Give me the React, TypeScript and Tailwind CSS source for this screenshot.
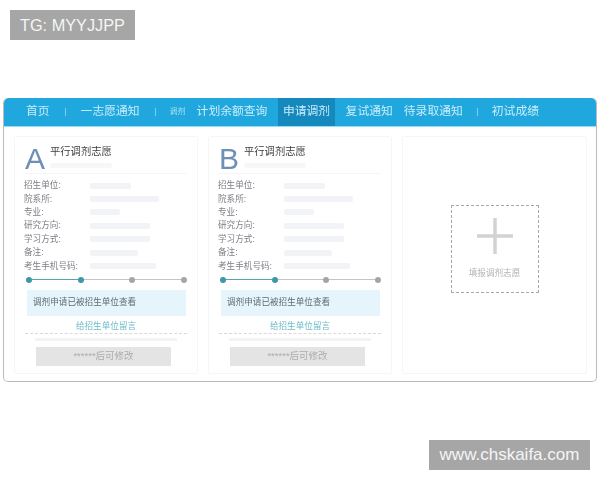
import React from 'react';

const CJK = "font-['Liberation_Sans','Noto_Sans_CJK_SC',sans-serif]";

const ROWS = [
  { label: '招生单位:', bar: 'w-[41px]' },
  { label: '院系所:', bar: 'w-[69px]' },
  { label: '专业:', bar: 'w-[30px]' },
  { label: '研究方向:', bar: 'w-[60px]' },
  { label: '学习方式:', bar: 'w-[60px]' },
  { label: '备注:', bar: 'w-[48px]' },
  { label: '考生手机号码:', bar: 'w-[66px]' },
];

function Separator({ className }: { className: string }) {
  return <span className={`w-px h-[8px] bg-[#7fd0ee] ${className}`} />;
}

function Nav() {
  return (
    <div className="flex items-center h-[29px] bg-[#20a8de] rounded-t-[5px] border-b border-[#8fe0f8] text-[#c9ecf9] text-[11.8px] whitespace-nowrap">
      <span className="ml-[22px]">首页</span>
      <Separator className="ml-[15px]" />
      <span className="ml-[15px]">一志愿通知</span>
      <Separator className="ml-[15px]" />
      <span className="ml-[14px] text-[8px] text-[#a9def3]">调剂</span>
      <span className="ml-[11px]">计划余额查询</span>
      <span className="ml-[11px] h-full px-[4.5px] flex items-center bg-[#1589bd]">申请调剂</span>
      <span className="ml-[11px]">复试通知</span>
      <span className="ml-[11px]">待录取通知</span>
      <Separator className="ml-[14px]" />
      <span className="ml-[14px]">初试成绩</span>
    </div>
  );
}

function Step({ on, line }: { on: boolean; line?: string }) {
  return (
    <>
      <span className={`w-[6px] h-[6px] rounded-full shrink-0 ${on ? 'bg-[#3e97a8]' : 'bg-[#a5a5a5]'}`} />
      {line && <span className={`flex-1 h-px ${line}`} />}
    </>
  );
}

function ChoiceCard({ letter }: { letter: string }) {
  return (
    <div className="w-[184px] h-[238px] border border-[#f6f6f6] rounded-[2px] flex flex-col">
      <div className="flex h-[37px] mx-[10px] border-b border-[#f6f6f6]">
        <span className="w-[25px] text-[30px] leading-[37px] text-[#6f90b6] font-['Liberation_Sans',sans-serif] mt-[3px]">
          {letter}
        </span>
        <div className="flex flex-col">
          <span className="text-[10.3px] leading-[14px] mt-[8px] text-[#3d3d3d]">平行调剂志愿</span>
          <span className="w-[62px] h-[5px] mt-[4px] bg-[#f6f7f9] rounded-[2px]" />
        </div>
      </div>
      <div className="flex flex-col mt-[5px] ml-[9px]">
        {ROWS.map((row) => (
          <div key={row.label} className="flex items-center h-[13.4px]">
            <span className="w-[66px] text-[8.6px] text-[#7b7f85] whitespace-nowrap">{row.label}</span>
            <span className={`h-[6px] bg-[#f1f3f6] rounded-[2px] ${row.bar}`} />
          </div>
        ))}
      </div>
      <div className="flex items-center ml-[11px] mr-[10px] mt-[4px]">
        <Step on line="bg-[#5aa5b3]" />
        <Step on line="bg-[#c4c4c4]" />
        <Step on={false} line="bg-[#c4c4c4]" />
        <Step on={false} />
      </div>
      <div className="ml-[12px] mr-[11px] mt-[7px] h-[26px] pl-[6px] flex items-center bg-[#e6f4fb] text-[8.6px] text-[#5f6b74]">
        调剂申请已被招生单位查看
      </div>
      <div className="mt-[4px] text-center text-[8.6px] leading-[13px] text-[#6cbccb]">给招生单位留言</div>
      <div className="mx-[10px] border-t border-dashed border-[#d9d9d9]" />
      <span className="mx-[20px] mt-[4px] h-[3px] bg-[#f2f3f4]" />
      <div className="ml-[21px] w-[135px] mt-[6px] h-[19px] flex items-center justify-center bg-[#e4e4e4] text-[9.5px] text-[#adadad]">
        ******后可修改
      </div>
    </div>
  );
}

function AddCard() {
  return (
    <div className="w-[185px] h-[238px] border border-[#f6f6f6] rounded-[2px] flex justify-center pt-[68px]">
      <div className="w-[88px] h-[88px] border border-dashed border-[#a8a8a8] flex flex-col items-center">
        <svg width="36" height="36" viewBox="0 0 36 36" className="mt-[12px]">
          <path d="M18 0v36M0 18h36" stroke="#d2d2d2" strokeWidth="3.5" fill="none" />
        </svg>
        <span className="mt-[13px] text-[8.6px] leading-[12px] text-[#b4b4b4] whitespace-nowrap">填报调剂志愿</span>
      </div>
    </div>
  );
}

export default function App() {
  return (
    <div className={`w-[600px] h-[480px] bg-white flex flex-col overflow-hidden ${CJK}`}>
      <div className="self-start ml-[10px] mt-[10px] w-[125px] h-[30px] bg-[#a6a6a6] text-[#f5f5f5] text-[16.3px] leading-[30px] pl-[10px] whitespace-nowrap">
        TG: MYYJJPP
      </div>
      <div className="mx-[3px] mt-[58px] h-[284px] rounded-[5px] border border-t-0 border-[#b9bcbe] blur-[0.5px]">
        <Nav />
        <div className="flex gap-[10px] ml-[10px] mt-[9px]">
          <ChoiceCard letter="A" />
          <ChoiceCard letter="B" />
          <AddCard />
        </div>
      </div>
      <div className="self-end mr-[10px] mt-[58px] w-[161px] h-[30px] bg-[#a6a6a6] text-[#f5f5f5] text-[17px] leading-[30px] text-center whitespace-nowrap">
        www.chskaifa.com
      </div>
    </div>
  );
}
